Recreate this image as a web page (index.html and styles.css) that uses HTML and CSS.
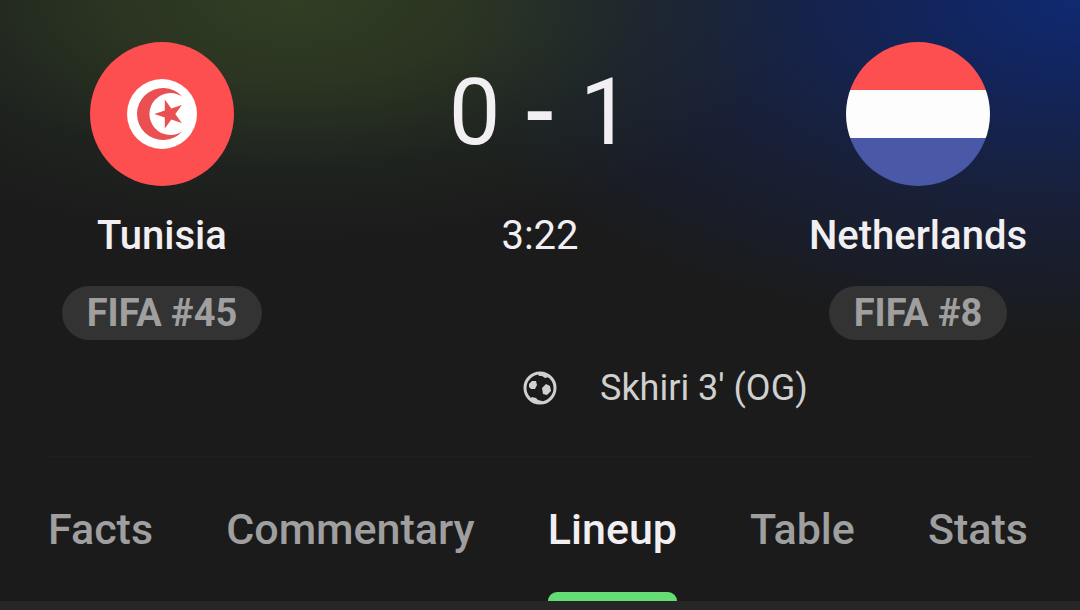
FILE: index.html
```
<!DOCTYPE html>
<html lang="en">
<head>
    <meta charset="UTF-8" />
    <meta name="viewport" content="width=device-width, initial-scale=1.0" />
    <title>Tunisia 0 - 1 Netherlands</title>
    <link rel="stylesheet" href="styles.css">
</head>
<body>
    <header class="match">
        <!-- ========= Teams and score ========= -->
        <div class="scoreboard">
            <section class="team">
                <svg class="flag" viewBox="0 0 144 144" aria-hidden="true">
                    <circle cx="72" cy="72" r="72" fill="#fd4f50" />
                    <circle cx="72" cy="72" r="35" fill="#fff" />
                    <path d="M92.500 54.800 A26 26 0 1 0 92.500 89.200 A21 21 0 1 1 92.500 54.800 Z" fill="#ea4f52" />
                    <path d="M64.300 72 L74.800 68.600 L74.800 57.500 L81.300 66.500 L91.800 63 L85.300 72 L91.800 81 L81.300 77.500 L74.800 86.500 L74.800 75.400 Z" fill="#ea4f52" />
                </svg>
                <h2 class="team-name">Tunisia</h2>
                <span class="rank">FIFA #45</span>
            </section>

            <div class="result">
                <h1 class="score"><span>0</span> <span class="dash">-</span> <span>1</span></h1>
                <time class="clock">3:22</time>
            </div>

            <section class="team">
                <svg class="flag" viewBox="0 0 144 144" aria-hidden="true">
                    <clipPath id="round"><circle cx="72" cy="72" r="72" /></clipPath>
                    <g clip-path="url(#round)">
                        <rect y="48" width="144" height="48" fill="#fdfdfd" />
                        <rect width="144" height="48" fill="#fd4f50" />
                        <rect y="96" width="144" height="48" fill="#4959a8" />
                    </g>
                </svg>
                <h2 class="team-name">Netherlands</h2>
                <span class="rank">FIFA #8</span>
            </section>
        </div>

        <!-- ========= Goals ========= -->
        <div class="events">
            <svg class="ball" viewBox="0 0 34 34" aria-hidden="true">
                <circle cx="17" cy="17" r="15" fill="none" stroke="#d0d0d0" stroke-width="3" />
                <path d="M14 1 L16 5 L19 5 L22 7 L26 6 L28 5 L20 1 Z" fill="#d0d0d0" />
                <path d="M7 28 L9 26 L13 27 L15 29 L19 30 L20 33 L12 32 Z" fill="#d0d0d0" />
                <path d="M6 13 L9 10 L13 10 L14 14 L12 18 L8 18 L6 16 Z" fill="#d0d0d0" />
                <path d="M19 17 L23 13 L27 15 L28 20 L24 24 L20 23 Z" fill="#d0d0d0" />
            </svg>
            <span class="scorer">Skhiri 3' (OG)</span>
        </div>

        <!-- ========= Tabs ========= -->
        <nav class="tabs">
            <button class="tab" type="button">Facts</button>
            <button class="tab" type="button">Commentary</button>
            <button class="tab tab-active" type="button" aria-current="page">Lineup</button>
            <button class="tab" type="button">Table</button>
            <button class="tab" type="button">Stats</button>
        </nav>
    </header>
</body>
</html>
```
FILE: styles.css
```
:root {
    --bg-page: #262626;
    --bg-match: #1b1b1b;
    --bg-rank: #333333;
    --text-main: #f2eff2;
    --text-event: #d0d0d0;
    --text-muted: #9f9f9f;
    --accent: #66dd74;
}

* {
    box-sizing: border-box;
}

body {
    font-family: Roboto, "Liberation Sans", sans-serif;
    background: var(--bg-page);
    margin: 0;
    color: var(--text-main);
}

h1, h2 {
    margin: 0;
}

.match {
    padding-top: 42px;
    background:
        radial-gradient(ellipse 48% 240px at 27% 0, rgba(50, 64, 36, 0.95) 0%, rgba(48, 61, 36, 0.75) 35%, rgba(38, 50, 38, 0.35) 70%, transparent 100%),
        radial-gradient(ellipse 62% 340px at 100% 0, #102a72 0%, #12245a 25%, #18203a 58%, transparent 100%),
        var(--bg-match);
}

/* ====== Teams and score ====== */
.scoreboard {
    display: grid;
    grid-template-columns: 3fr 4fr 3fr;
}
.team, .result {
    display: flex;
    flex-direction: column;
    align-items: center;
}
.flag {
    width: 144px;
    height: 144px;
}
.team-name {
    margin: 26px 0;
    font-size: 40px;
    line-height: 48px;
    font-weight: 500;
}
.rank {
    padding: 0 25px;
    border-radius: 27px;
    background: var(--bg-rank);
    color: var(--text-muted);
    font-size: 38px;
    line-height: 54px;
    font-weight: 700;
}
.score {
    display: flex;
    gap: 24px;
    font-size: 92px;
    line-height: 142px;
    font-weight: 400;
}
.dash {
    font-weight: 500;
}
.clock {
    margin-top: 28px;
    font-size: 40px;
    line-height: 48px;
}

/* ====== Goals ====== */
.events {
    display: grid;
    grid-template-columns: 1fr auto 1fr;
    align-items: center;
    column-gap: 43px;
    padding: 24px 0 44px;
}
.ball {
    grid-column: 2;
    width: 34px;
    height: 34px;
}
.scorer {
    color: var(--text-event);
    font-size: 36px;
    line-height: 48px;
}

/* ====== Tabs ====== */
.tabs {
    display: flex;
    justify-content: space-between;
    margin: 0 48px;
    padding-right: 4px;
    border-top: 1px solid #1f1f1f;
}
.tab {
    padding: 0;
    border: 0;
    background: none;
    color: var(--text-muted);
    font-family: inherit;
    font-size: 43px;
    line-height: 144px;
    font-weight: 500;
}
.tab-active {
    position: relative;
    color: var(--text-main);
}
.tab-active::after {
    content: "";
    position: absolute;
    left: 0;
    right: 0;
    bottom: 0;
    height: 9px;
    border-radius: 9px 9px 0 0;
    background: var(--accent);
}
```
